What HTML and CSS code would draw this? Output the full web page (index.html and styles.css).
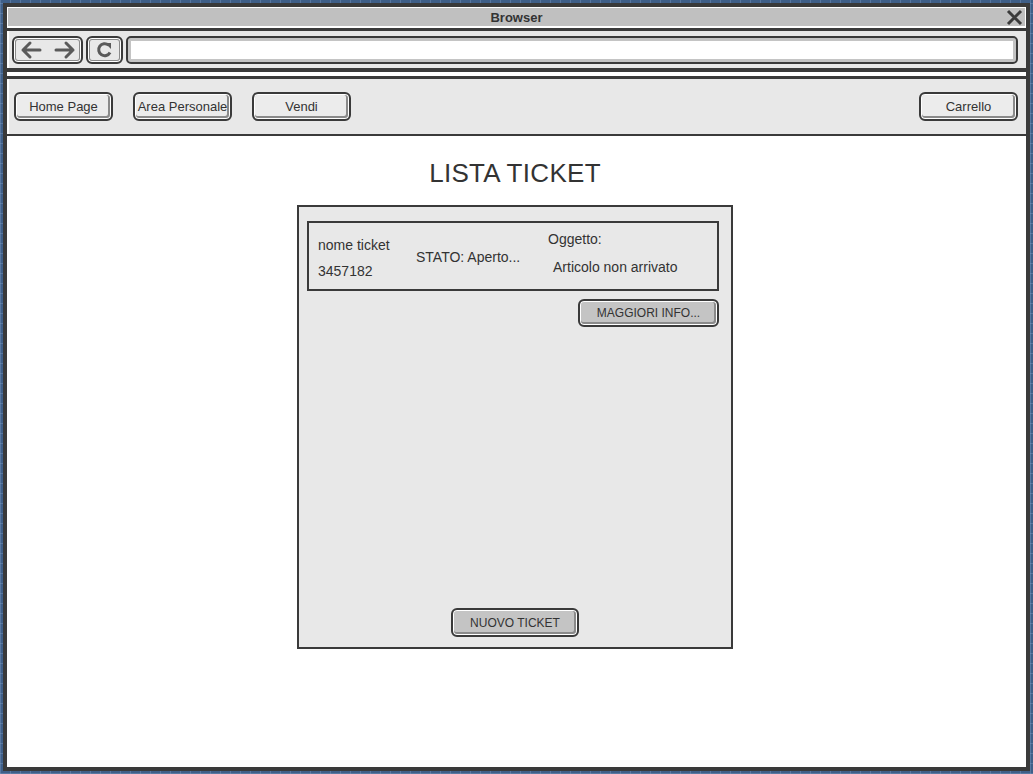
FILE: index.html
```html
<!DOCTYPE html>
<html>
<head>
<meta charset="utf-8">
<title>Lista Ticket</title>
<link rel="stylesheet" href="styles.css">
</head>
<body>
<div class="window">
  <div class="titlebar">
    <span class="title">Browser</span>
    <svg class="close" width="17" height="17" viewBox="0 0 17 17"><path d="M2 2 L15 15 M15 2 L2 15" stroke="#3a3a3a" stroke-width="3" fill="none"/></svg>
  </div>
  <div class="rule3"></div>
  <div class="toolbar">
    <div class="tbtn nav-arrows">
      <svg width="56" height="20" viewBox="0 0 56 20"><path d="M3 10 H20 M3 10 L10 3 M3 10 L10 17" stroke="#5a5a5a" stroke-width="3" fill="none" stroke-linecap="round" stroke-linejoin="round"/><path d="M36 10 H53 M53 10 L46 3 M53 10 L46 17" stroke="#5a5a5a" stroke-width="3" fill="none" stroke-linecap="round" stroke-linejoin="round"/></svg>
    </div>
    <div class="tbtn reload">
      <svg width="20" height="20" viewBox="0 0 20 20"><path d="M15 12.5 A6 6 0 1 1 13.5 5" stroke="#5a5a5a" stroke-width="3" fill="none"/><path d="M10 3 L16 3 L16 9 Z" fill="#5a5a5a"/></svg>
    </div>
    <div class="url"></div>
  </div>
  <div class="rule4"></div>
  <div class="gap3"></div>
  <div class="rule3"></div>
  <div class="navbar">
    <div class="btn navbtn">Home Page</div>
    <div class="btn navbtn">Area Personale</div>
    <div class="btn navbtn">Vendi</div>
    <div class="spacer"></div>
    <div class="btn navbtn">Carrello</div>
  </div>
  <div class="rule2"></div>
  <div class="content">
    <h1 class="heading">LISTA TICKET</h1>
    <div class="panel">
      <div class="card">
        <div class="col col1">
          <div>nome ticket</div>
          <div>3457182</div>
        </div>
        <div class="col col2">STATO: Aperto...</div>
        <div class="col col3">
          <div>Oggetto:</div>
          <div class="obj">Articolo non arrivato</div>
        </div>
      </div>
      <div class="info-row">
        <div class="btn gray info">MAGGIORI INFO...</div>
      </div>
      <div class="grow"></div>
      <div class="new-row">
        <div class="btn gray newticket">NUOVO TICKET</div>
      </div>
    </div>
  </div>
</div>
</body>
</html>
```
FILE: styles.css
```css
html, body {
  margin: 0;
  padding: 0;
}
body {
  width: 1033px;
  height: 774px;
  background-color: #3f5f88;
  background-image:
    repeating-linear-gradient(90deg, rgba(120,150,190,0.45) 0 1px, transparent 1px 10px),
    repeating-linear-gradient(0deg, rgba(120,150,190,0.45) 0 1px, transparent 1px 10px);
  font-family: "Liberation Sans", "DejaVu Sans", sans-serif;
  color: #333;
  overflow: hidden;
  padding: 3px;
  box-sizing: border-box;
}
.window {
  width: 1027px;
  height: 768px;
  box-sizing: border-box;
  border: 4px solid #3a3a3a;
  background: #fff;
  display: flex;
  flex-direction: column;
}
.titlebar {
  height: 18px;
  margin: 1px 1px 2px 1px;
  background: #c0c0c0;
  position: relative;
  display: flex;
  align-items: center;
  justify-content: center;
}
.title {
  font-size: 13px;
  font-weight: bold;
  color: #333;
}
.close {
  position: absolute;
  right: 2px;
  top: 1px;
}
.rule3 { height: 3px; background: #3a3a3a; }
.rule4 { height: 4px; background: #3a3a3a; }
.rule2 { height: 2px; background: #3a3a3a; }
.gap3 { height: 4px; background: #fff; }
.toolbar {
  height: 37px;
  background: #e8e8e8;
  display: flex;
  align-items: center;
  padding: 0 8px 0 3px;
  gap: 3px;
  box-sizing: border-box;
  border-left: 2px solid #fff;
}
.tbtn {
  height: 28px;
  box-sizing: border-box;
  border: 2px solid #3a3a3a;
  border-radius: 6px;
  box-shadow: inset 0 0 0 1px #fff, inset 0 0 0 2px #8a8a8a;
  display: flex;
  align-items: center;
  justify-content: center;
  background: #e8e8e8;
}
.nav-arrows { width: 71px; }
.reload { width: 37px; }
.url {
  flex: 1;
  height: 28px;
  box-sizing: border-box;
  border: 2px solid #3a3a3a;
  border-radius: 5px;
  background: #fff;
  box-shadow: inset 0 0 0 3px #c4c4c4;
}
.navbar {
  height: 55px;
  background: #e8e8e8;
  display: flex;
  align-items: center;
  padding: 0 8px 0 5px;
  gap: 20px;
  box-sizing: border-box;
  border-left: 2px solid #fff;
}
.spacer { flex: 1; }
.btn {
  height: 29px;
  box-sizing: border-box;
  border: 2px solid #3a3a3a;
  border-radius: 6px;
  box-shadow: inset 0 0 0 1px #fff, inset -1px -1px 0 2px #8a8a8a;
  display: flex;
  align-items: center;
  justify-content: center;
  font-size: 13px;
  color: #333;
  white-space: nowrap;
}
.navbtn {
  width: 99px;
  background: #ececec;
}
.content {
  flex: 1;
  display: flex;
  flex-direction: column;
  align-items: center;
  padding-right: 3px;
}
.heading {
  margin: 22px 0 0 0;
  font-size: 26px;
  font-weight: normal;
  color: #333;
  line-height: 30px;
  height: 30px;
  letter-spacing: 0.3px;
}
.panel {
  margin-top: 17px;
  width: 436px;
  height: 444px;
  box-sizing: border-box;
  border: 2px solid #3a3a3a;
  background: #e8e8e8;
  display: flex;
  flex-direction: column;
  padding: 14px 12px 10px 8px;
}
.card {
  height: 70px;
  box-sizing: border-box;
  border: 2px solid #3a3a3a;
  display: flex;
  padding-left: 9px;
  font-size: 14px;
}
.col1 {
  width: 98px;
  padding-top: 9px;
  line-height: 26px;
}
.col2 {
  width: 132px;
  padding-top: 24px;
  line-height: 20px;
}
.col3 {
  padding-top: 6px;
  line-height: 20px;
}
.obj {
  margin-top: 8px;
  padding-left: 5px;
}
.info-row {
  display: flex;
  justify-content: flex-end;
  margin-top: 8px;
}
.gray {
  background: #c4c4c4;
}
.info {
  width: 141px;
  height: 28px;
  font-size: 12px;
}
.grow { flex: 1; }
.new-row {
  display: flex;
  justify-content: center;
  padding-left: 4px;
}
.newticket {
  width: 128px;
  font-size: 12px;
}
```
